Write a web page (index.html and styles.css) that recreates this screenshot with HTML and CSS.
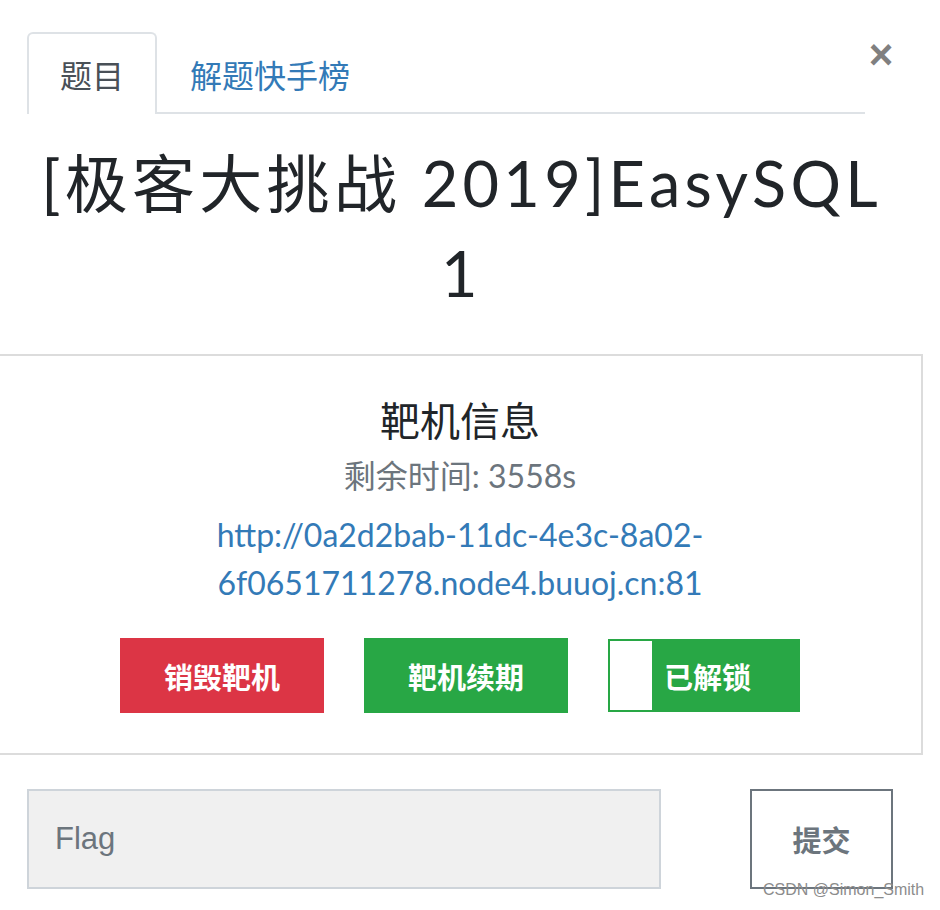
FILE: index.html
```html
<!DOCTYPE html>
<html lang="zh-CN">
<head>
<meta charset="utf-8">
<title>[极客大挑战 2019]EasySQL 1</title>
<link rel="stylesheet" href="styles.css">
</head>
<body>
<div class="page">
  <div class="modal">
    <div class="header">
      <ul class="tabs">
        <li class="tab active">题目</li>
        <li class="tab">解题快手榜</li>
      </ul>
      <button class="close" type="button">×</button>
    </div>
    <h1 class="title">[极客大挑战 2019]EasySQL <br>1</h1>
    <div class="box">
      <h2 class="box-title">靶机信息</h2>
      <p class="remain">剩余时间: 3558s</p>
      <a class="url" href="#">http://0a2d2bab-11dc-4e3c-8a02-6f0651711278.node4.buuoj.cn:81</a>
      <div class="actions">
        <button class="btn btn-danger" type="button">销毁靶机</button>
        <button class="btn btn-success" type="button">靶机续期</button>
        <div class="toggle"><span class="handle"></span><span class="toggle-label">已解锁</span></div>
      </div>
    </div>
    <form class="flag-row">
      <input class="flag-input" type="text" placeholder="Flag">
      <button class="submit" type="button">提交</button>
    </form>
  </div>
  <span class="watermark">CSDN @Simon_Smith</span>
</div>
</body>
</html>
```
FILE: styles.css
```css
* { box-sizing: border-box; }
html, body { margin: 0; padding: 0; background: #fff; }
body { font-family: Lato, "Noto Sans CJK SC", sans-serif; color: #212529; }

.page { position: relative; width: 940px; height: 910px; overflow: hidden; }
.modal { width: 923px; }

.header { display: flex; align-items: flex-start; padding: 32px 0 0 27px; }
.tabs {
  display: flex; margin: 0; padding: 0; list-style: none;
  width: 838px; height: 82px;
  border-bottom: 2px solid #dee2e6;
}
.tab {
  font-family: "Noto Sans CJK SC", sans-serif;
  font-size: 32px; line-height: 40px;
  padding: 20px 31px;
  height: 82px;
  margin-bottom: -2px;
  border: 2px solid transparent; border-bottom: 0;
  color: #337ab7;
}
.tab.active {
  color: #495057; background: #fff;
  border-color: #dee2e6;
  border-radius: 6px 6px 0 0;
}
.close {
  margin: 3px 0 0 1px; padding: 0;
  width: 30px; height: 40px;
  background: none; border: 0;
  font-family: "Liberation Sans", sans-serif;
  font-size: 42px; font-weight: 700; line-height: 40px;
  color: #808080;
}

.title {
  margin: 24px 0 36px;
  font-family: Lato, "Noto Sans CJK SC", sans-serif;
  font-size: 63px; line-height: 90px; font-weight: 400;
  letter-spacing: 4.3px;
  text-align: center; color: #212529;
}

.box {
  margin-left: -3px;
  border: 2px solid #dcdcdc;
  padding: 41px 0 40px;
  text-align: center;
}
.box-title { margin: 0; font-size: 40px; line-height: 48px; font-weight: 400; color: #212529; }
.remain { margin: 13px 0 0; font-size: 32px; line-height: 36px; color: #6c757d; }
.url {
  display: block; margin: 17px auto 0; width: 640px;
  font-size: 32px; line-height: 48px; color: #337ab7; text-decoration: none;
}
.actions { display: flex; justify-content: center; align-items: center; gap: 40px; margin-top: 31px; }
.btn {
  width: 204px; height: 75px; border: 0; padding: 0;
  font-family: "Noto Sans CJK SC", sans-serif;
  font-size: 29px; font-weight: 700; color: #fff;
}
.btn-danger { background: #dc3545; }
.btn-success { background: #28a745; }
.toggle {
  display: flex; width: 192px; height: 73px;
  border: 2px solid #28a745; background: #28a745;
}
.handle { width: 42px; background: #fff; }
.toggle-label {
  display: flex; align-items: center; padding-left: 12px;
  font-family: "Noto Sans CJK SC", sans-serif;
  font-size: 29px; font-weight: 700; color: #fff;
}

.flag-row { display: flex; gap: 89px; margin: 34px 0 0; padding-left: 27px; }
.flag-input {
  width: 634px; height: 100px;
  background: #f0f0f0; border: 2px solid #ced4da; border-radius: 0;
  padding: 0 0 0 26px; outline: none;
  font-family: "Liberation Sans", sans-serif; font-size: 31px; color: #495057;
}
.flag-input::placeholder { color: #6c757d; }
.submit {
  width: 143px; height: 100px; padding: 0;
  background: #fff; border: 2px solid #6c757d;
  font-family: "Noto Sans CJK SC", sans-serif;
  font-size: 29px; font-weight: 700; color: #6c757d;
}

.watermark {
  position: absolute; left: 763px; top: 881px;
  font-family: "Liberation Sans", sans-serif; font-size: 16px; line-height: 18px;
  color: #8c8c8c; white-space: nowrap;
}
```
